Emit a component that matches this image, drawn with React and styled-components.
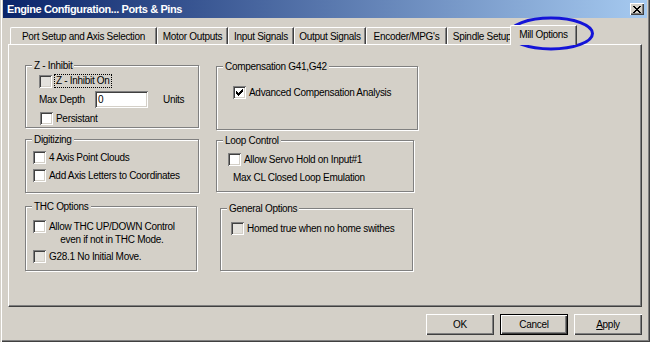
import styled, { createGlobalStyle } from "styled-components";

const GlobalStyle = createGlobalStyle`
  html, body {
    margin: 0;
    padding: 0;
    background: #d4d0c8;
  }
  body {
    font-family: "Liberation Sans", Arial, sans-serif;
    font-size: 10px;
    letter-spacing: -0.3px;
    color: #000;
  }
`;

const tabs = [
  { label: "Port Setup and Axis Selection", w: 147 },
  { label: "Motor Outputs", w: 71 },
  { label: "Input Signals", w: 66 },
  { label: "Output Signals", w: 72 },
  { label: "Encoder/MPG's", w: 81 },
  { label: "Spindle Setup", w: 70 },
];

const Check = () => (
  <svg width="7" height="7" viewBox="0 0 7 7" shapeRendering="crispEdges">
    <path
      d="M0 2h1v3H0z M1 3h1v3H1z M2 4h1v3H2z M3 3h1v3H3z M4 2h1v3H4z M5 1h1v3H5z M6 0h1v3H6z"
      fill="#000"
    />
  </svg>
);

const CloseGlyph = () => (
  <svg width="8" height="7" viewBox="0 0 8 7" shapeRendering="crispEdges">
    <path
      d="M0 0h2v1H0z M6 0h2v1H6z M1 1h2v1H1z M5 1h2v1H5z M2 2h4v1H2z M3 3h2v1H3z M2 4h4v1H2z M1 5h2v1H1z M5 5h2v1H5z M0 6h2v1H0z M6 6h2v1H6z"
      fill="#000"
    />
  </svg>
);

const CheckBox = ({ checked, dim }) => (
  <Box $dim={dim}>{checked && <Check />}</Box>
);

const App = () => {
  return (
    <>
      <GlobalStyle />
      <Window>
        <TitleBar>
          <Title>Engine Configuration... Ports &amp; Pins</Title>
          <CloseButton>
            <CloseGlyph />
          </CloseButton>
        </TitleBar>
        <Body>
          <TabStrip>
            {tabs.map((t) => (
              <Tab key={t.label} $w={t.w}>
                {t.label}
              </Tab>
            ))}
            <Tab $w={67} $active $overlap={7}>
              Mill Options
            </Tab>
          </TabStrip>
          <TabPanel>
            <Column $pt={20}>
              <Group $w={174} $h={63}>
                <Legend>Z - Inhibit</Legend>
                <Row $mt={2} $ml={13}>
                  <CheckBox dim />
                  <FocusLabel>Z - Inhibit On</FocusLabel>
                </Row>
                <Row $mt={3} $ml={13}>
                  <FieldLabel>Max Depth</FieldLabel>
                  <Field readOnly value="0" />
                  <Units>Units</Units>
                </Row>
                <Row $mt={4} $ml={14}>
                  <CheckBox />
                  <Text>Persistant</Text>
                </Row>
              </Group>
              <Group $w={174} $h={54} $mt={11}>
                <Legend>Digitizing</Legend>
                <Row $mt={5} $ml={7}>
                  <CheckBox />
                  <Text>4 Axis Point Clouds</Text>
                </Row>
                <Row $mt={5} $ml={7}>
                  <CheckBox />
                  <Text>Add Axis Letters to Coordinates</Text>
                </Row>
              </Group>
              <Group $w={172} $h={65} $mt={13}>
                <Legend>THC Options</Legend>
                <Row $mt={7} $ml={7} $top>
                  <CheckBox />
                  <MultiText>
                    Allow THC UP/DOWN Control
                    <br />
                    even if not in THC Mode.
                  </MultiText>
                </Row>
                <Row $mt={4} $ml={7}>
                  <CheckBox dim />
                  <Text>G28.1 No Initial Move.</Text>
                </Row>
              </Group>
            </Column>
            <Column $pt={21}>
              <Group $w={202} $h={64}>
                <Legend>Compensation G41,G42</Legend>
                <Row $mt={13} $ml={16}>
                  <CheckBox checked />
                  <Text>Advanced Compensation Analysis</Text>
                </Row>
              </Group>
              <Group $w={198} $h={52} $mt={10}>
                <Legend>Loop Control</Legend>
                <Row $mt={6} $ml={11}>
                  <CheckBox />
                  <Text>Allow Servo Hold on Input#1</Text>
                </Row>
                <Row $mt={5} $ml={16}>
                  <Text>Max CL Closed Loop Emulation</Text>
                </Row>
              </Group>
              <Group $w={193} $h={63} $mt={16} $ml={4}>
                <Legend>General Options</Legend>
                <Row $mt={7} $ml={10}>
                  <CheckBox dim />
                  <Text>Homed true when no home swithes</Text>
                </Row>
              </Group>
            </Column>
          </TabPanel>
          <ButtonRow>
            <Button>OK</Button>
            <Button $default>Cancel</Button>
            <Button>
              <u>A</u>pply
            </Button>
          </ButtonRow>
        </Body>
        <Highlight width="88" height="35" viewBox="0 0 88 35">
          <ellipse cx="44" cy="17.5" rx="41.5" ry="15.5" fill="none" stroke="#1414d8" strokeWidth="3" />
        </Highlight>
      </Window>
    </>
  );
};

export default App;

const Window = styled.div`
  position: relative;
  width: 650px;
  height: 342px;
  box-sizing: border-box;
  padding: 0 3px 2px 3px;
  background: #d4d0c8;
  box-shadow: inset 1px 0 0 #d4d0c8, inset 2px 0 0 #fff, inset -1px -1px 0 #404040,
    inset -2px -2px 0 #808080;
  display: flex;
  flex-direction: column;
  overflow: hidden;
`;

const TitleBar = styled.div`
  flex: none;
  height: 18px;
  display: flex;
  align-items: center;
  justify-content: space-between;
  padding: 0 3px 0 4px;
  background: linear-gradient(to right, #0a246a, #a6caf0);
`;

const Title = styled.span`
  color: #fff;
  font-weight: bold;
  font-size: 11px;
  letter-spacing: -0.4px;
`;

const CloseButton = styled.div`
  width: 14px;
  height: 12px;
  box-sizing: border-box;
  display: flex;
  align-items: center;
  justify-content: center;
  background: #d4d0c8;
  box-shadow: inset 1px 1px 0 #fff, inset -1px -1px 0 #404040, inset -2px -2px 0 #808080;
`;

const Body = styled.div`
  flex: 1;
  display: flex;
  flex-direction: column;
  padding: 0 5px;
`;

const TabStrip = styled.div`
  display: flex;
  align-items: flex-end;
  height: 19px;
  margin: 7px 0 0 2px;
`;

const Tab = styled.div`
  position: relative;
  z-index: ${(p) => (p.$active ? 2 : 1)};
  width: ${(p) => p.$w}px;
  height: ${(p) => (p.$active ? 20 : 17)}px;
  margin-left: ${(p) => (p.$overlap ? -p.$overlap : 0)}px;
  margin-bottom: ${(p) => (p.$active ? -1 : 0)}px;
  box-sizing: border-box;
  display: flex;
  align-items: center;
  justify-content: center;
  padding-bottom: ${(p) => (p.$active ? 2 : 0)}px;
  white-space: nowrap;
  overflow: hidden;
  background: #d4d0c8;
  border-top: 1px solid #fff;
  border-left: 1px solid #fff;
  border-right: 1px solid #404040;
  border-top-left-radius: 2px;
  box-shadow: inset -1px 0 0 #808080;
`;

const TabPanel = styled.div`
  height: 263px;
  box-sizing: border-box;
  display: flex;
  gap: 17px;
  padding-left: 16px;
  border-top: 1px solid #fff;
  border-left: 1px solid #fff;
  border-right: 1px solid #404040;
  border-bottom: 1px solid #404040;
  box-shadow: inset -1px -1px 0 #808080;
`;

const Column = styled.div`
  display: flex;
  flex-direction: column;
  align-items: flex-start;
  padding-top: ${(p) => p.$pt}px;
`;

const Group = styled.div`
  width: ${(p) => p.$w}px;
  height: ${(p) => p.$h}px;
  margin: ${(p) => p.$mt || 0}px 0 0 ${(p) => p.$ml || 0}px;
  box-sizing: border-box;
  display: flex;
  flex-direction: column;
  align-items: flex-start;
  border: 1px solid #808080;
  box-shadow: inset 1px 1px 0 #fff, 1px 1px 0 #fff;
`;

const Legend = styled.span`
  margin: -7px 0 0 6px;
  padding: 0 2px;
  height: 13px;
  line-height: 13px;
  background: #d4d0c8;
  white-space: nowrap;
`;

const Row = styled.div`
  display: flex;
  align-items: ${(p) => (p.$top ? "flex-start" : "center")};
  gap: 3px;
  margin: ${(p) => p.$mt || 0}px 0 0 ${(p) => p.$ml || 0}px;
  white-space: nowrap;
`;

const Box = styled.span`
  flex: none;
  width: 13px;
  height: 13px;
  box-sizing: border-box;
  display: flex;
  align-items: center;
  justify-content: center;
  background: ${(p) => (p.$dim ? "#e4e2dd" : "#fff")};
  box-shadow: inset 1px 1px 0 #808080, inset -1px -1px 0 #fff, inset 2px 2px 0 #404040,
    inset -2px -2px 0 #d4d0c8;
`;

const Text = styled.span`
  line-height: 13px;
`;

const FocusLabel = styled.span`
  line-height: 12px;
  margin-left: -1px;
  padding: 0 1px;
  border: 1px dotted #000;
`;

const MultiText = styled.span`
  line-height: 13px;
  text-align: center;
`;

const FieldLabel = styled.span`
  width: 53px;
`;

const Field = styled.input`
  width: 53px;
  height: 17px;
  box-sizing: border-box;
  margin: 0;
  padding: 0 3px;
  border: none;
  outline: none;
  font: inherit;
  letter-spacing: inherit;
  background: #fff;
  box-shadow: inset 1px 1px 0 #808080, inset -1px -1px 0 #fff, inset 2px 2px 0 #404040,
    inset -2px -2px 0 #d4d0c8;
`;

const Units = styled.span`
  margin-left: 12px;
`;

const ButtonRow = styled.div`
  display: flex;
  justify-content: flex-end;
  gap: 6px;
  margin-top: 7px;
`;

const Button = styled.button`
  width: 68px;
  height: 21px;
  box-sizing: border-box;
  margin: 0;
  padding: 0;
  font: inherit;
  letter-spacing: inherit;
  color: #000;
  background: #d4d0c8;
  border: ${(p) => (p.$default ? "1px solid #000" : "none")};
  box-shadow: inset 1px 1px 0 #fff, inset -1px -1px 0 #404040, inset -2px -2px 0 #808080;
`;

const Highlight = styled.svg`
  position: absolute;
  left: 507px;
  top: 16px;
  pointer-events: none;
`;
